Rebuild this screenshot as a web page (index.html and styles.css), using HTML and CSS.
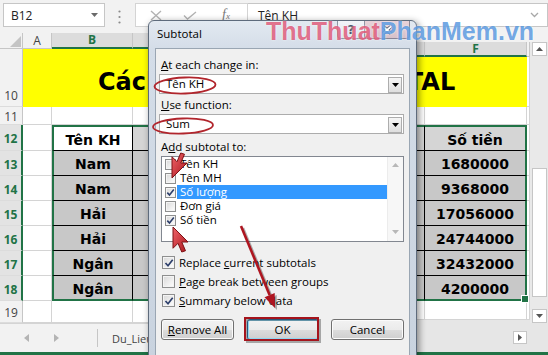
FILE: index.html
```html
<!DOCTYPE html>
<html lang="vi">
<head>
<meta charset="utf-8">
<title>Subtotal</title>
<link rel="stylesheet" href="styles.css">
</head>
<body>
<div class="app">
  <div class="fbar">
    <div class="namebox"><span class="nb-text">B12</span><svg class="nb-caret" width="7" height="4" viewBox="0 0 7 4"><path d="M0 0H7L3.5 4Z" fill="#6a6a6a"/></svg></div>
    <svg class="fb-dots" width="3" height="14" viewBox="0 0 3 14"><circle cx="1.5" cy="1.5" r="1.1" fill="#8a8a8a"/><circle cx="1.5" cy="7" r="1.1" fill="#8a8a8a"/><circle cx="1.5" cy="12.5" r="1.1" fill="#8a8a8a"/></svg>
    <div class="fb-tools">
      <svg class="ic-x" width="12" height="11" viewBox="0 0 12 11"><path d="M1 1L11 10M11 1L1 10" stroke="#b3b3b3" stroke-width="1.4" fill="none"/></svg>
      <svg class="ic-ok" width="14" height="9" viewBox="0 0 14 9"><path d="M1 4.5L4.5 8L13 1" stroke="#b3b3b3" stroke-width="1.4" fill="none"/></svg>
      <span class="ic-fx">f<span class="fx-sub">x</span></span>
    </div>
    <div class="fb-input"><span class="fb-text">Tên KH</span><svg class="fb-chev" width="9" height="6" viewBox="0 0 9 6"><path d="M1 1L4.5 4.5L8 1" stroke="#a8a8a8" stroke-width="1.3" fill="none"/></svg></div>
  </div>

  <div class="sheet">
    <div class="pane-left">
      <div class="hd corner"><svg width="11" height="11" viewBox="0 0 11 11"><path d="M11 0V11H0Z" fill="#c4c4c4"/></svg></div>
      <div class="hd">A</div>
      <div class="hd hd-sel">B</div>
      <div class="hd hd-sel"></div>

      <div class="rh rh-bottom">10</div>
      <div class="c c-title"><span class="title">Cách dùng hàm SUBTOTAL</span></div>

      <div class="rh">11</div>
      <div class="c"></div><div class="c"></div><div class="c"></div>

      <div class="rh rh-sel">12</div>
      <div class="c"></div>
      <div class="t t-active t-top t-left">Tên KH</div>
      <div class="t t-hdr t-top t-cut"></div>

      <div class="rh rh-sel">13</div>
      <div class="c"></div>
      <div class="t t-left">Nam</div>
      <div class="t t-cut"></div>

      <div class="rh rh-sel">14</div>
      <div class="c"></div>
      <div class="t t-left">Nam</div>
      <div class="t t-cut"></div>

      <div class="rh rh-sel">15</div>
      <div class="c"></div>
      <div class="t t-left">Hải</div>
      <div class="t t-cut"></div>

      <div class="rh rh-sel">16</div>
      <div class="c"></div>
      <div class="t t-left">Hải</div>
      <div class="t t-cut"></div>

      <div class="rh rh-sel">17</div>
      <div class="c"></div>
      <div class="t t-left">Ngân</div>
      <div class="t t-cut"></div>

      <div class="rh rh-sel">18</div>
      <div class="c"></div>
      <div class="t t-left t-bottom">Ngân</div>
      <div class="t t-cut t-bottom"></div>

      <div class="rh">19</div>
      <div class="c"></div><div class="c"></div><div class="c"></div>
    </div>

    <div class="pane-mid"></div>

    <div class="pane-right">
      <div class="hd hd-sel"></div>
      <div class="hd hd-sel">F</div>
      <div class="hd"></div>

      <div class="c c-yellow"></div>
      <div class="c"></div>

      <div class="c"></div><div class="c"></div><div class="c"></div>

      <div class="t t-hdr t-top"></div>
      <div class="t t-hdr t-top t-right">Số tiền</div>
      <div class="c"></div>

      <div class="t"></div><div class="t t-right">1680000</div><div class="c"></div>
      <div class="t"></div><div class="t t-right">9368000</div><div class="c"></div>
      <div class="t"></div><div class="t t-right">17056000</div><div class="c"></div>
      <div class="t"></div><div class="t t-right">24744000</div><div class="c"></div>
      <div class="t"></div><div class="t t-right">32432000</div><div class="c"></div>
      <div class="t t-bottom"></div><div class="t t-right t-bottom t-handle">4200000</div><div class="c"></div>

      <div class="c"></div><div class="c"></div><div class="c"></div>
      <div class="filler"></div>
    </div>

    <div class="vscroll">
      <div class="sb-btn"><svg width="7" height="4" viewBox="0 0 7 4"><path d="M0 4H7L3.5 0Z" fill="#555"/></svg></div>
      <div class="sb-thumb"></div>
      <div class="sb-btn sb-down"><svg width="7" height="4" viewBox="0 0 7 4"><path d="M0 0H7L3.5 4Z" fill="#555"/></svg></div>
    </div>
  </div>

  <div class="bottom">
    <div class="tabs">
      <svg class="tab-prev" width="5" height="8" viewBox="0 0 5 8"><path d="M5 0V8L0 4Z" fill="#b4b4b4"/></svg>
      <svg class="tab-next" width="5" height="8" viewBox="0 0 5 8"><path d="M0 0V8L5 4Z" fill="#b4b4b4"/></svg>
      <span class="tab-sep"></span>
      <span class="tab-name">Du_Lieu</span>
    </div>
    <div class="hscroll">
      <div class="hs-btn"><svg width="4" height="7" viewBox="0 0 4 7"><path d="M0 0V7L4 3.5Z" fill="#555"/></svg></div>
    </div>
  </div>
  <div class="status"></div>
</div>

<div class="dialog">
  <div class="dlg-bar">
    <span class="dlg-title">Subtotal</span>
    <span class="tb-help">?</span>
    <span class="tb-close"><svg width="12" height="10" viewBox="0 0 12 10"><path d="M2 1.5L10 8.5M10 1.5L2 8.5" stroke="#3c4c66" stroke-width="3.4" fill="none"/><path d="M2 1.5L10 8.5M10 1.5L2 8.5" stroke="#ffffff" stroke-width="1.7" fill="none"/></svg></span>
  </div>
  <div class="dlg-client">
    <div class="lbl lbl1"><u>A</u>t each change in:</div>
    <div class="combo"><span class="combo-text">Tên KH</span><span class="combo-btn"><svg width="7" height="4" viewBox="0 0 7 4"><path d="M0 0H7L3.5 4Z" fill="#000"/></svg></span></div>
    <div class="lbl lbl2"><u>U</u>se function:</div>
    <div class="combo"><span class="combo-text">Sum</span><span class="combo-btn"><svg width="7" height="4" viewBox="0 0 7 4"><path d="M0 0H7L3.5 4Z" fill="#000"/></svg></span></div>
    <div class="lbl lbl3">A<u>d</u>d subtotal to:</div>
    <div class="listbox">
      <div class="list-items">
        <div class="li"><span class="cb"></span><span class="li-text">Tên KH</span></div>
        <div class="li"><span class="cb"></span><span class="li-text">Tên MH</span></div>
        <div class="li"><span class="cb"><svg width="9" height="9" viewBox="0 0 9 9"><path d="M1.3 4.6L3.5 7L7.8 1.5" stroke="#2d3f6b" stroke-width="1.6" fill="none"/></svg></span><span class="li-text li-sel">Số lượng</span></div>
        <div class="li"><span class="cb"></span><span class="li-text">Đơn giá</span></div>
        <div class="li"><span class="cb"><svg width="9" height="9" viewBox="0 0 9 9"><path d="M1.3 4.6L3.5 7L7.8 1.5" stroke="#2d3f6b" stroke-width="1.6" fill="none"/></svg></span><span class="li-text">Số tiền</span></div>
      </div>
      <div class="list-sb">
        <svg width="7" height="4" viewBox="0 0 7 4"><path d="M0 4H7L3.5 0Z" fill="#b8b8b8"/></svg>
        <svg width="7" height="4" viewBox="0 0 7 4"><path d="M0 0H7L3.5 4Z" fill="#b8b8b8"/></svg>
      </div>
    </div>
    <div class="opt opt-first"><span class="cb cb2"><svg width="10" height="10" viewBox="0 0 10 10"><path d="M1.5 5L4 7.8L8.7 1.8" stroke="#2d3f6b" stroke-width="1.7" fill="none"/></svg></span><span>Replace <u>c</u>urrent subtotals</span></div>
    <div class="opt"><span class="cb cb2"></span><span><u>P</u>age break between groups</span></div>
    <div class="opt"><span class="cb cb2"><svg width="10" height="10" viewBox="0 0 10 10"><path d="M1.5 5L4 7.8L8.7 1.8" stroke="#2d3f6b" stroke-width="1.7" fill="none"/></svg></span><span><u>S</u>ummary below data</span></div>
    <div class="btns">
      <span class="btn"><u>R</u>emove All</span>
      <span class="btn btn-def">OK</span>
      <span class="btn">Cancel</span>
    </div>
  </div>
</div>

<div class="watermark"><span class="wm-red">ThuThuat</span><span class="wm-blue">PhanMem.vn</span></div>

<svg class="annot" width="548" height="355" viewBox="0 0 548 355">
  <defs>
    <linearGradient id="cur" x1="0" y1="0" x2="1" y2="1">
      <stop offset="0" stop-color="#f0646a"/>
      <stop offset="1" stop-color="#a9151c"/>
    </linearGradient>
  </defs>
  <ellipse cx="185" cy="85.5" rx="30.5" ry="8" fill="none" stroke="#b1252c" stroke-width="1.8" transform="rotate(-2 185 85.5)"/>
  <ellipse cx="183" cy="126" rx="30" ry="7.5" fill="none" stroke="#b1252c" stroke-width="1.8" transform="rotate(-2 183 126)"/>
  <g opacity="0.3" transform="translate(2 2)">
    <path d="M241 226L269.6 295.1" stroke="#000" stroke-width="2.6" fill="none"/>
    <path d="M275 308L264.5 297.2L274.7 293Z" fill="#000"/>
    <rect x="245" y="318" width="73" height="22" fill="none" stroke="#000" stroke-width="2"/>
  </g>
  <path d="M241 226L269.6 295.1" stroke="#ae1620" stroke-width="2.6" fill="none"/>
  <path d="M275 308L264.5 297.2L274.7 293Z" fill="#ae1620"/>
  <rect x="245" y="318" width="73" height="22" fill="none" stroke="#a5141c" stroke-width="2"/>
  <path transform="translate(172 178) scale(1.25)" d="M0 0V-17L4 -13L7 -20L10 -19L7 -12H12Z" fill="url(#cur)" stroke="#7d1014" stroke-width="0.8" stroke-linejoin="round"/>
  <path transform="translate(173 227) scale(1.25)" d="M0 0V17L4 13L7 20L10 19L7 12H12Z" fill="url(#cur)" stroke="#7d1014" stroke-width="0.8" stroke-linejoin="round"/>
</svg>
</body>
</html>
```

FILE: styles.css
```css
* { box-sizing: border-box; margin: 0; padding: 0; }
html, body { width: 548px; height: 355px; overflow: hidden; }
body {
  position: relative;
  background: #fff;
  font-family: "Open Sans", "Noto Sans", sans-serif;
  font-size: 12px;
  color: #222;
}
.app { display: flex; flex-direction: column; height: 355px; }

/* formula bar */
.fbar {
  flex: none; height: 30px; background: #f2f2f2;
  display: flex; align-items: flex-start; padding: 3px 0 0 3px;
}
.namebox {
  width: 102px; height: 24px; background: #fff; border: 1px solid #c6c6c6;
  display: flex; align-items: center; justify-content: space-between;
  padding: 0 6px 0 7px; font-size: 12px; color: #222;
}
.fb-dots { margin: 7px 0 0 13px; }
.fb-tools {
  width: 113px; height: 24px; margin-left: 14px; background: #fff;
  border: 1px solid #d4d4d4; display: flex; align-items: center; padding-left: 14px;
}
.ic-ok { margin-left: 21px; }
.ic-fx {
  margin-left: 25px; font-family: "Liberation Serif", serif; font-style: italic;
  font-size: 14px; color: #7a7a7a; line-height: 14px;
}
.fx-sub { font-size: 9px; }
.fb-input {
  flex: 1; height: 24px; background: #fff; border: 1px solid #c6c6c6; border-left: none;
  display: flex; align-items: center; padding-left: 10px; font-size: 12px;
}
.fb-chev { margin-left: auto; margin-right: 8px; }

/* sheet */
.sheet { flex: none; height: 293px; display: flex; }
.pane-left {
  width: 150px; flex: none; padding-top: 3px; background: #f2f2f2;
  display: grid; grid-template-columns: 23px 29px 81px 17px;
  grid-template-rows: 16px 58px 18px 26px repeat(6, 25px) 22px;
}
.pane-mid { flex: 1; background: #fff; }
.pane-right {
  width: 120px; flex: none; padding-top: 12px; background: #f2f2f2;
  display: grid; grid-template-columns: 15px 102px 3px;
  grid-template-rows: 15px 50px 18px 26px repeat(6, 25px) 19px 3px;
}
.hd {
  background: #f2f2f2; border-right: 1px solid #c6c6c6; border-bottom: 1px solid #c6c6c6;
  display: flex; align-items: center; justify-content: center;
  font-size: 12px; color: #444; line-height: 14px;
}
.corner { align-items: flex-end; justify-content: flex-end; padding: 0 1px 1px 0; }
.hd-sel {
  background: #dcdcdc; color: #217346; font-weight: bold;
  border-bottom: 2px solid #217346;
}
.rh {
  background: #f2f2f2; border-right: 1px solid #c6c6c6; border-bottom: 1px solid #dcdcdc;
  display: flex; align-items: center; justify-content: center;
  font-size: 12px; color: #444; padding-top: 2px;
}
.rh-bottom { align-items: flex-end; padding: 0 0 2px; line-height: 16px; }
.rh-sel {
  background: #e3e3e3; color: #217346; font-weight: bold;
  border-right: 2px solid #217346;
}
.c { background: #fff; border-right: 1px solid #d4d4d4; border-bottom: 1px solid #d4d4d4; }
.c-title {
  grid-column: 2 / 5; background: #ffff00; border: none;
  display: flex; align-items: flex-end; padding: 0 0 13px 75px;
}
.title {
  position: relative; z-index: 1; white-space: nowrap;
  font-family: "DejaVu Sans", sans-serif; font-weight: bold; font-size: 24px;
  line-height: 24px; color: #000;
}
.c-yellow { grid-column: 1 / 3; background: #ffff00; border-right: none; border-bottom: none; }
.t {
  background: #c8c8c8; border-right: 1px solid #000; border-bottom: 1px solid #000;
  display: flex; align-items: center; justify-content: center; padding-top: 2px;
  font-family: "DejaVu Sans", sans-serif; font-weight: bold; font-size: 14px; color: #000;
}
.t-hdr { background: #d5d5d5; }
.t-active { background: #fff; }
.t-top { border-top: 2px solid #217346; }
.t-left { border-left: 2px solid #217346; }
.t-right { border-right: 2px solid #217346; }
.t-bottom { border-bottom: 2px solid #217346; }
.t-cut { border-right: none; }
.t-handle { position: relative; }
.t-handle::after {
  content: ""; position: absolute; right: -4px; bottom: -4px; width: 6px; height: 6px;
  background: #217346; border: 1px solid #fff;
}
.filler { grid-column: 1 / -1; background: #e6e6e6; }

.vscroll {
  width: 18px; flex: none; padding-top: 12px;
  background: linear-gradient(#f2f2f2 12px, #e9e9e9 12px);
  display: flex; flex-direction: column; align-items: center;
}
.sb-btn {
  width: 15px; height: 14px; background: #fff; border: 1px solid #c6c6c6;
  display: flex; align-items: center; justify-content: center;
}
.sb-thumb { width: 15px; height: 129px; margin-top: 112px; background: #fff; border: 1px solid #c6c6c6; }
.sb-down { margin-top: auto; }

/* bottom */
.bottom { flex: none; height: 29px; display: flex; }
.tabs {
  flex: 1; background: #f2f2f2; border-top: 1px solid #d4d4d4;
  display: flex; align-items: center; padding-left: 24px; overflow: hidden;
}
.tab-next { margin-left: 25px; }
.tab-sep { width: 1px; height: 18px; background: #c6c6c6; margin-left: 38px; }
.tab-name { margin-left: 14px; font-size: 11px; color: #444; white-space: nowrap; }
.hscroll {
  width: 133px; flex: none; background: #e6e6e6;
  display: flex; align-items: center; justify-content: flex-end; padding-right: 21px;
}
.hs-btn {
  width: 14px; height: 13px; background: #fff; border: 1px solid #c6c6c6;
  display: flex; align-items: center; justify-content: center;
}
.status { flex: none; height: 3px; background: #217346; }

/* dialog */
.dialog {
  position: absolute; left: 148px; top: 20px; width: 269px; height: 340px; z-index: 5;
  border: 1px solid #5e6b7c; border-radius: 6px 6px 0 0;
  background: linear-gradient(180deg, #e2e9f1 0, #d4dde8 28px, #c9d3df 100%);
  box-shadow: 2px 2px 7px rgba(0, 0, 0, 0.45);
  padding: 0 6px; display: flex; flex-direction: column;
  font-size: 11.5px; color: #000;
}
.dlg-bar { height: 27px; flex: none; display: flex; align-items: flex-start; }
.dlg-title { margin: 5px 0 0 2px; line-height: 16px; font-size: 11.5px; }
.tb-help {
  margin-left: auto; width: 28px; height: 18px;
  border: 1px solid rgba(60, 72, 95, 0.55); border-top: none; border-radius: 0 0 0 4px;
  background: linear-gradient(rgba(255,255,255,0.55), rgba(220,228,238,0.4));
  display: flex; align-items: center; justify-content: center;
  font-family: "DejaVu Sans", sans-serif; font-weight: bold; font-size: 12px; color: #44536b;
}
.tb-close {
  width: 45px; height: 18px;
  border: 1px solid rgba(60, 72, 95, 0.55); border-top: none; border-left: none; border-radius: 0 0 4px 0;
  background: linear-gradient(rgba(235,200,205,0.7), rgba(210,160,170,0.5));
  display: flex; align-items: center; justify-content: center;
}
.dlg-client {
  flex: 1; background: #f0f0f0; border: 1px solid #9aa6b3;
  padding: 0 5px 0 3px; display: flex; flex-direction: column;
}
.lbl { height: 14px; line-height: 14px; padding-left: 2px; white-space: nowrap; }
.lbl1 { margin-top: 9px; }
.lbl2 { margin-top: 4px; }
.lbl3 { margin-top: 6px; }
.combo {
  margin-top: 2px; height: 20px; background: #fff; border: 1px solid #acacac;
  display: flex; align-items: center;
}
.combo-text { flex: 1; padding-left: 6px; line-height: 14px; }
.combo-btn {
  width: 14px; height: 16px; margin-right: 1px; margin-top: 1px;
  border: 1px solid #adadad; background: linear-gradient(#f6f6f6, #dedede);
  display: flex; align-items: center; justify-content: center;
}
.listbox {
  margin: 2px 0 0 2px; height: 86px; background: #fff; border: 1px solid #828790;
  display: flex;
}
.list-items { flex: 1; display: flex; flex-direction: column; }
.li { height: 14px; display: flex; align-items: center; }
.cb {
  width: 11px; height: 11px; margin-left: 3px; margin-right: 1px; flex: none;
  border: 1px solid #8e8f8f; background: linear-gradient(135deg, #d8d8d8, #ffffff);
  box-shadow: inset 0 0 0 1px #f4f4f4;
  display: flex; align-items: center; justify-content: center;
}
.li-text { flex: 1; height: 14px; line-height: 14px; padding-left: 3px; white-space: nowrap; }
.li-sel { background: #3399ff; color: #fff; }
.list-sb {
  width: 16px; flex: none; background: #f7f7f7; border-left: 1px solid #ececec;
  display: flex; flex-direction: column; align-items: center; justify-content: space-between;
  padding: 6px 0 7px;
}
.opt { height: 19px; display: flex; align-items: center; white-space: nowrap; }
.opt-first { margin-top: 11px; }
.cb2 { width: 13px; height: 13px; margin-left: 3px; margin-right: 4px; }
.btns {
  margin: 9px 0 0 2px; height: 21px; display: flex; justify-content: space-between;
}
.btn {
  width: 73px; height: 21px; border: 1px solid #707070; border-radius: 3px;
  background: linear-gradient(#f2f2f2 0%, #ebebeb 50%, #dddddd 51%, #cfcfcf 100%);
  box-shadow: inset 0 0 0 1px #fbfbfb;
  display: flex; align-items: center; justify-content: center; font-size: 11.5px;
}
.btn-def {
  width: 72px; border-color: #3c7fb1;
  box-shadow: inset 0 0 0 1px #8fd6f2;
}

/* watermark + annotations */
.watermark {
  position: absolute; left: 266px; top: 19px; z-index: 6; white-space: nowrap;
  font-family: "Liberation Sans", Arial, sans-serif; font-weight: bold; font-size: 25px;
  line-height: 25px; text-shadow: 0 0 2px rgba(255, 255, 255, 0.8);
}
.wm-red { color: rgba(214, 45, 85, 0.68); }
.wm-blue { color: rgba(45, 125, 215, 0.68); }
.annot { position: absolute; left: 0; top: 0; z-index: 7; pointer-events: none; }
```
